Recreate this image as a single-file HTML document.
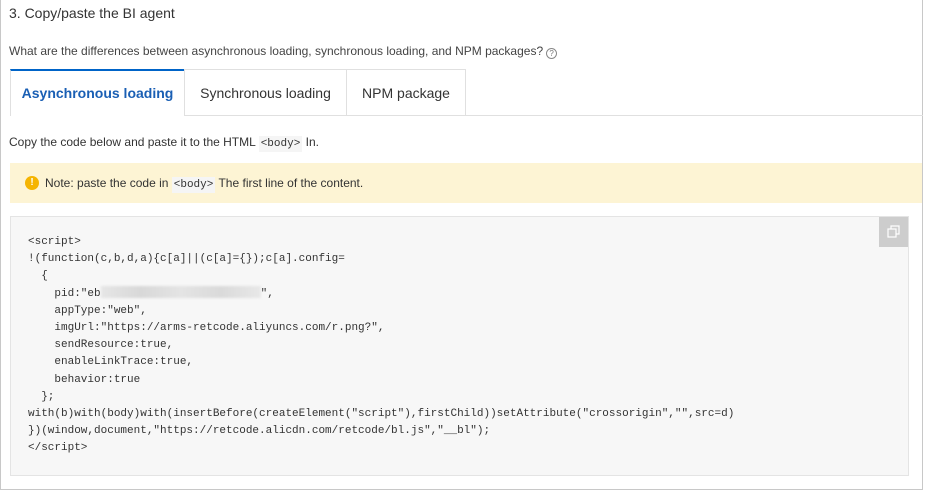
<!DOCTYPE html>
<html><head><meta charset="utf-8"><style>
*{margin:0;padding:0;box-sizing:border-box}
body{width:925px;height:490px;background:#fff;font-family:"Liberation Sans",sans-serif;color:#333;position:relative;overflow:hidden}
.frame{position:absolute;left:0;top:-1px;width:923px;height:491px;border:1px solid #c8c8c8;border-top:none}
.abs{position:absolute;white-space:nowrap}
.title{left:9px;top:5px;font-size:14px;color:#333}
.q{left:9px;top:44px;font-size:12px;color:#444}
.q span{display:inline-block;width:11px;height:11px;border:1px solid #888;border-radius:50%;font-size:8px;text-align:center;line-height:9px;color:#777;vertical-align:-1px;margin-left:3px}
.tab{position:absolute;top:69px;height:47px;border:1px solid #e0e0e0;font-size:14px;text-align:center;line-height:46px;color:#333;background:#fff}
.line{position:absolute;left:184px;right:2px;top:115px;border-top:1px solid #e0e0e0}
.code{font-family:"Liberation Mono",monospace;font-size:11px;background:#f5f5f5;padding:2px 2px}
.copy{left:9px;top:135px;font-size:12px}
.note{position:absolute;left:10px;top:163px;width:912px;height:40px;background:#fdf4d4;font-size:12px;line-height:40px;padding-left:35px}
.note i{position:absolute;left:15px;top:13px;width:14px;height:14px;border-radius:50%;background:#f5b400;color:#fff;font-style:normal;font-weight:bold;font-size:10px;line-height:14px;text-align:center}
.box{position:absolute;left:10px;top:216px;width:899px;height:260px;background:#f7f7f7;border:1px solid #e4e4e4}
pre{position:absolute;left:17px;top:17px;font-family:"Liberation Mono",monospace;font-size:11px;line-height:17.2px;color:#333}
.btn{position:absolute;right:0;top:0;width:29px;height:30px;background:#cdcdcd}
.blur{display:inline-block;width:160px;height:12px;background:linear-gradient(90deg,#e6e6e6,#d8d8d8,#e4e4e4,#dadada,#e8e8e8);vertical-align:-2px;filter:blur(1px)}
</style></head><body>
<div class="frame"></div>
<div class="abs title">3. Copy/paste the BI agent</div>
<div class="abs q">What are the differences between asynchronous loading, synchronous loading, and NPM packages?<span>?</span></div>
<div class="line"></div>
<div class="tab" style="left:10px;width:175px;border-top:2px solid #0064c8;border-bottom:none;color:#1a5fb4;font-weight:bold;line-height:45px;height:47px">Asynchronous loading</div>
<div class="tab" style="left:184px;width:163px">Synchronous loading</div>
<div class="tab" style="left:346px;width:120px">NPM package</div>
<div class="abs copy">Copy the code below and paste it to the HTML <span class="code">&lt;body&gt;</span> In.</div>
<div class="note"><i>!</i>Note: paste the code in <span class="code">&lt;body&gt;</span> The first line of the content.</div>
<div class="box">
<div class="btn"><svg width="29" height="30"><rect x="9" y="12" width="8" height="8" fill="none" stroke="#fff" stroke-width="1.2"/><path d="M12 12V9h8v8h-3" fill="none" stroke="#fff" stroke-width="1.2"/></svg></div>
<pre>&lt;script&gt;
!(function(c,b,d,a){c[a]||(c[a]={});c[a].config=
  {
    pid:"eb<span class="blur"></span>",
    appType:"web",
    imgUrl:"https://arms-retcode.aliyuncs.com/r.png?",
    sendResource:true,
    enableLinkTrace:true,
    behavior:true
  };
with(b)with(body)with(insertBefore(createElement("script"),firstChild))setAttribute("crossorigin","",src=d)
})(window,document,"https://retcode.alicdn.com/retcode/bl.js","__bl");
&lt;/script&gt;</pre>
</div>
</body></html>
